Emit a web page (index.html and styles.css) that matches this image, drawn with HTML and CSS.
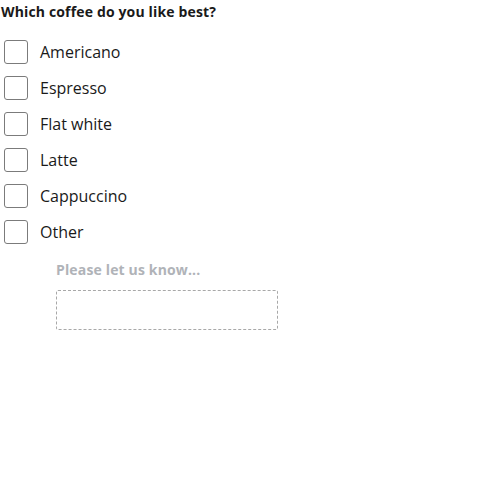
FILE: index.html
```html
<!DOCTYPE html>
<html>
<head>
<meta charset="utf-8">
<link rel="stylesheet" href="styles.css">
</head>
<body>
<div class="question">
  <h1 class="title">Which coffee do you like best?</h1>
  <ul class="options">
    <li class="option"><span class="box"></span><span class="label">Americano</span></li>
    <li class="option"><span class="box"></span><span class="label">Espresso</span></li>
    <li class="option"><span class="box"></span><span class="label">Flat white</span></li>
    <li class="option"><span class="box"></span><span class="label">Latte</span></li>
    <li class="option"><span class="box"></span><span class="label">Cappuccino</span></li>
    <li class="option"><span class="box"></span><span class="label">Other</span></li>
  </ul>
  <div class="other">
    <div class="other-label">Please let us know...</div>
    <div class="other-input"></div>
  </div>
</div>
</body>
</html>
```
FILE: styles.css
```css
html, body {
  margin: 0;
  padding: 0;
  background: #fff;
}
body {
  font-family: "Open Sans", sans-serif;
  color: #1a1a1a;
}
.question {
  padding: 2px 0 0 1px;
}
.title {
  margin: 0;
  font-size: 14px;
  font-weight: 700;
  letter-spacing: 0.15px;
  line-height: 20px;
}
.options {
  list-style: none;
  margin: 0;
  padding: 18px 0 0 3px;
  display: flex;
  flex-direction: column;
  gap: 12px;
}
.option {
  display: flex;
  align-items: center;
  gap: 12px;
  height: 24px;
}
.box {
  width: 22px;
  height: 22px;
  border: 1px solid #7b7b7b;
  border-radius: 3px;
  flex: none;
}
.label {
  font-size: 16px;
  line-height: 24px;
}
.other {
  padding: 16px 0 0 55px;
}
.other-label {
  font-size: 14px;
  font-weight: 700;
  letter-spacing: 0.15px;
  color: #b0b3b8;
  line-height: 20px;
}
.other-input {
  margin-top: 10px;
  width: 220px;
  height: 38px;
  border: 1px dashed #a8a8a8;
  border-radius: 2px;
}
```
